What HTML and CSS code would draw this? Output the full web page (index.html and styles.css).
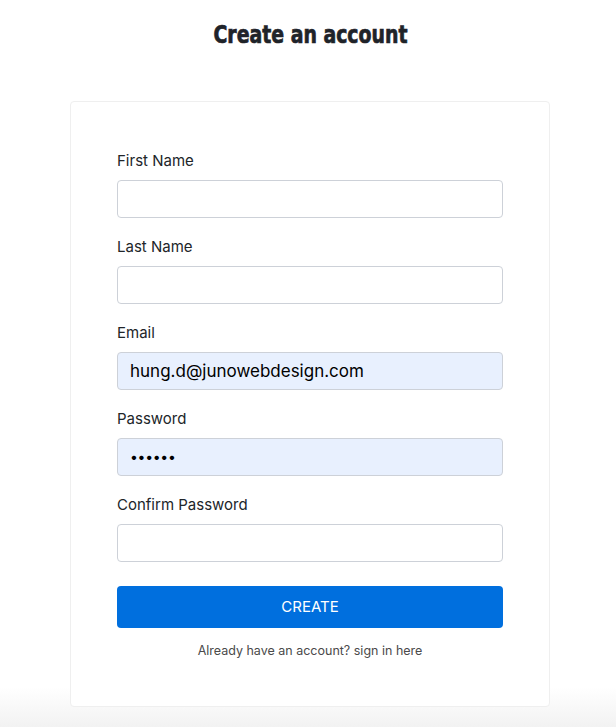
FILE: index.html
```html
<!DOCTYPE html>
<html>
<head>
<meta charset="utf-8">
<link rel="stylesheet" href="styles.css">
</head>
<body>
<div class="page">
  <h1 class="title"><span class="title-text">Create an account</span></h1>
  <form class="card">
    <div class="group">
      <label class="label">First Name</label>
      <div class="input"></div>
    </div>
    <div class="group">
      <label class="label">Last Name</label>
      <div class="input"></div>
    </div>
    <div class="group">
      <label class="label">Email</label>
      <div class="input filled">hung.d@junowebdesign.com</div>
    </div>
    <div class="group">
      <label class="label">Password</label>
      <div class="input filled dots">&#8226;&#8226;&#8226;&#8226;&#8226;&#8226;</div>
    </div>
    <div class="group">
      <label class="label">Confirm Password</label>
      <div class="input"></div>
    </div>
    <div class="button">CREATE</div>
    <p class="signin">Already have an account? sign in here</p>
  </form>
</div>
</body>
</html>
```

FILE: styles.css
```css
html, body {
  margin: 0;
  padding: 0;
}
body {
  font-family: Inter, "Noto Sans", sans-serif;
  color: #212529;
  background: linear-gradient(to bottom, #ffffff 0%, #ffffff 94.5%, #f2f2f2 100%);
  min-height: 727px;
}
.page {
  padding: 20px 0 0 4px;
}
.title {
  margin: 0 0 51px;
  font-family: "DejaVu Sans Condensed", "DejaVu Sans", sans-serif;
  font-weight: 700;
  font-size: 25px;
  line-height: 30px;
  text-align: center;
  color: #1f2329;
}
.title-text {
  display: inline-block;
  transform: scaleX(0.84);
  -webkit-text-stroke: 0.7px #1f2329;
}
.card {
  display: flex;
  flex-direction: column;
  width: 480px;
  box-sizing: border-box;
  margin: 0 auto;
  padding: 49px 46px 46px;
  background: #fff;
  border: 1px solid #efefef;
  border-radius: 4px;
}
.group {
  display: flex;
  flex-direction: column;
  margin-bottom: 19px;
}
.label {
  font-size: 15px;
  line-height: 20px;
  margin-bottom: 9px;
  color: #212529;
}
.input {
  height: 38px;
  box-sizing: border-box;
  border: 1px solid #cdd1d8;
  border-radius: 4px;
  background: #fff;
  padding: 0 12px;
  font-size: 17px;
  line-height: 36px;
  color: #000;
}
.input.filled {
  background: #e8f0fe;
}
.input.dots {
  font-size: 14px;
  letter-spacing: -0.3px;
}
.button {
  margin-top: 5px;
  height: 42px;
  border-radius: 4px;
  background: #006fde;
  color: #fff;
  font-size: 15px;
  line-height: 42px;
  text-align: center;
}
.signin {
  margin: 14px 0 0;
  font-size: 12.5px;
  line-height: 18px;
  text-align: center;
  color: #4a4a4a;
}
```
